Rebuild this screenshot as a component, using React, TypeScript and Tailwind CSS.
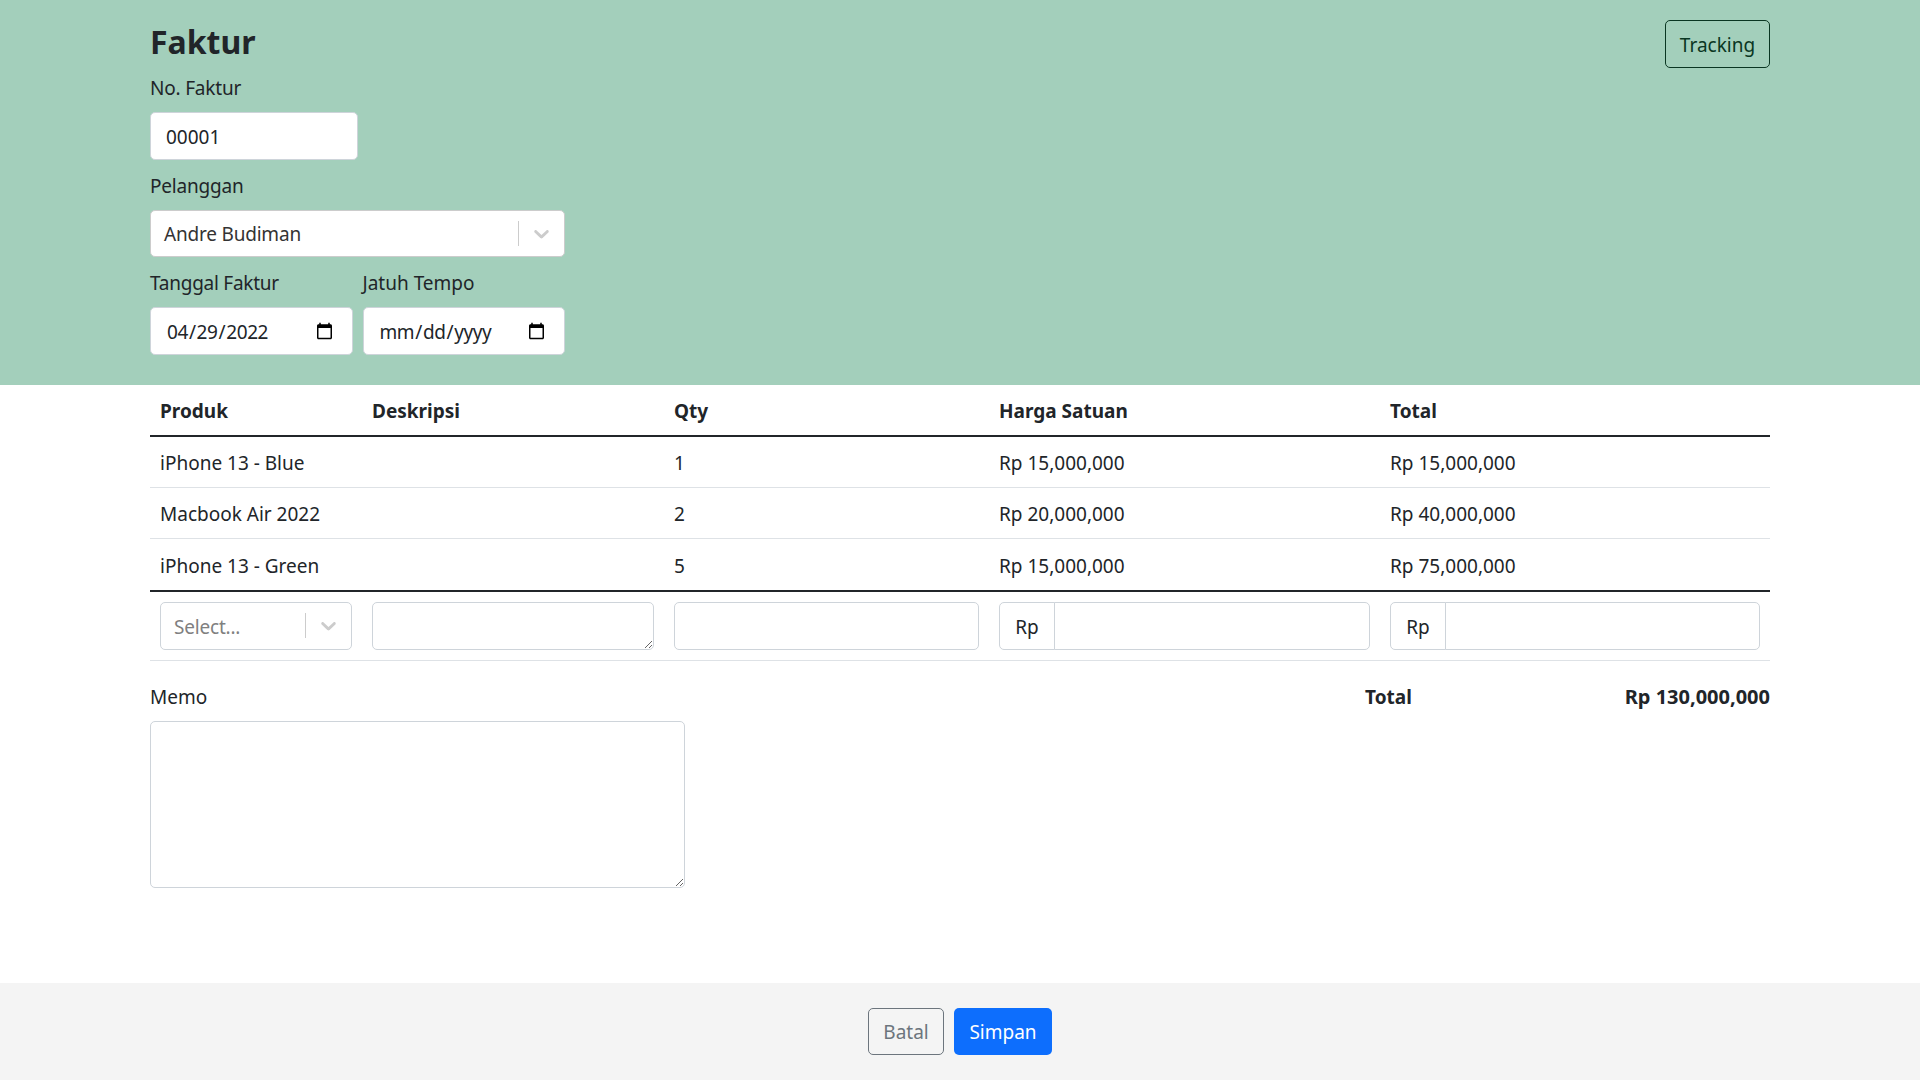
import React from 'react'

const rows = [
    { produk: "iPhone 13 - Blue", qty: 1, harga: "Rp 15,000,000", total: "Rp 15,000,000" },
    { produk: "Macbook Air 2022", qty: 2, harga: "Rp 20,000,000", total: "Rp 40,000,000" },
    { produk: "iPhone 13 - Green", qty: 5, harga: "Rp 15,000,000", total: "Rp 75,000,000" },
]

const inputClass = "block h-[47.5px] rounded-[5px] border border-[#ced4da] bg-white pl-[15px] pt-[2px] text-[19px] text-[#212529] outline-none"
const labelClass = "block h-[30px] pt-[1px]"

function Chevron() {
    return (
        <svg viewBox="0 0 20 20" className="size-[25px] fill-[#cccccc]">
            <path d="M4.516 7.548c0.436-0.446 1.043-0.481 1.576 0l3.908 3.747 3.908-3.747c0.533-0.481 1.141-0.446 1.574 0 0.436 0.445 0.408 1.197 0 1.615-0.406 0.418-4.695 4.502-4.695 4.502-0.217 0.223-0.502 0.335-0.787 0.335s-0.57-0.112-0.789-0.335c0 0-4.287-4.084-4.695-4.502s-0.436-1.17 0-1.615z" />
        </svg>
    )
}

function SelectBox({ label, muted }: { label: string; muted?: boolean }) {
    return (
        <div className={`flex items-center rounded-[5px] border bg-white ${muted ? "h-[48px] border-[#ced4da]" : "h-[47.5px] border-[#cccccc]"}`}>
            <span className={`flex-1 pt-[2px] pl-[13px] tracking-[-0.2px] ${muted ? "text-[#808080]" : "text-[#333333]"}`}>{label}</span>
            <span className="h-[25px] w-px bg-[#cccccc]" />
            <span className="px-[10px]"><Chevron /></span>
        </div>
    )
}

function RpInput() {
    return (
        <div className="flex h-[48px]">
            <span className="flex w-[56px] items-center justify-center rounded-l-[5px] border border-[#ced4da] bg-white pt-[2px]">Rp</span>
            <input className="-ml-px min-w-0 flex-1 rounded-r-[5px] border border-[#ced4da] bg-white px-[15px] outline-none" />
        </div>
    )
}

export default function App() {
    return (
        <div className="flex min-h-screen flex-col bg-white font-['Noto_Sans',sans-serif] text-[19px] leading-[30px] text-[#212529]">
            {/* Header form */}
            <section className="bg-[#a3cfbb] px-[150px] pt-[20px] pb-[30px]">
                <div className="flex items-start justify-between">
                    <div className="w-[415px]">
                        <h3 className="mb-[10px] h-[42px] pt-[1px] text-[32px] leading-[42px] font-bold">Faktur</h3>
                        <label className={`${labelClass} mb-[10px] tracking-[-0.2px]`}>No. Faktur</label>
                        <input className={`${inputClass} w-[208px] pr-[15px]`} defaultValue="00001" />
                        <label className={`${labelClass} mt-[10px] mb-[10px] tracking-[-0.2px]`}>Pelanggan</label>
                        <SelectBox label="Andre Budiman" />
                        <div className="mt-[10px] grid grid-cols-2 gap-x-[10px]">
                            <div>
                                <label className={`${labelClass} mb-[10px] tracking-[-0.25px]`}>Tanggal Faktur</label>
                                <input type="date" className={`${inputClass} w-full pr-[16px] tracking-[-0.4px]`} defaultValue="2022-04-29" />
                            </div>
                            <div>
                                <label className={`${labelClass} mb-[10px]`}>Jatuh Tempo</label>
                                <input type="date" className={`${inputClass} w-full pr-[16px] tracking-[-0.4px]`} />
                            </div>
                        </div>
                    </div>
                    <button className="h-[48px] w-[105px] rounded-[5px] border border-[#0a3622] pt-[1px] text-[#0a3622]">Tracking</button>
                </div>
            </section>

            {/* Items */}
            <section className="px-[150px]">
                <table className="w-full table-fixed border-collapse text-left">
                    <thead>
                        <tr className="h-[51px] border-b-2 border-[#212529]">
                            <th className="w-[212px] px-[10px] pt-[2px] font-bold">Produk</th>
                            <th className="w-[302px] px-[10px] pt-[2px] font-bold">Deskripsi</th>
                            <th className="w-[325px] px-[10px] pt-[2px] font-bold">Qty</th>
                            <th className="w-[391px] px-[10px] pt-[2px] font-bold">Harga Satuan</th>
                            <th className="w-[390px] px-[10px] pt-[2px] font-bold">Total</th>
                        </tr>
                    </thead>
                    <tbody>
                        {rows.map((row, index) => (
                            <tr key={index} className={`border-b ${index === 2 ? "h-[52px] border-b-2 border-[#212529]" : "h-[51.5px] border-[#dee2e6]"}`}>
                                <td className={`px-[10px] ${index === 2 ? "pt-[4px]" : "pt-[2px]"}`}>{row.produk}</td>
                                <td className="px-[10px]" />
                                <td className={`px-[10px] ${index === 2 ? "pt-[4px]" : "pt-[2px]"}`}>{row.qty}</td>
                                <td className={`px-[10px] ${index === 2 ? "pt-[4px]" : "pt-[2px]"}`}>{row.harga}</td>
                                <td className={`px-[10px] ${index === 2 ? "pt-[4px]" : "pt-[2px]"}`}>{row.total}</td>
                            </tr>
                        ))}
                        <tr className="border-b border-[#dee2e6]">
                            <td className="p-[10px]"><SelectBox label="Select..." muted /></td>
                            <td className="p-[10px]"><textarea className="block h-[48px] w-full rounded-[5px] border border-[#ced4da] bg-white outline-none" /></td>
                            <td className="p-[10px]"><input className="block h-[48px] w-full rounded-[5px] border border-[#ced4da] bg-white outline-none" /></td>
                            <td className="p-[10px]"><RpInput /></td>
                            <td className="p-[10px]"><RpInput /></td>
                        </tr>
                    </tbody>
                </table>

                {/* Memo and total */}
                <div className="mt-[21px] flex items-start">
                    <div className="w-[535px]">
                        <label className="mb-[9px] block">Memo</label>
                        <textarea className="block h-[167px] w-full rounded-[5px] border border-[#ced4da] bg-white outline-none" />
                    </div>
                    <div className="ml-[680px] flex flex-1 justify-between font-bold">
                        <span>Total</span>
                        <span className="text-[20px]">Rp 130,000,000</span>
                    </div>
                </div>
            </section>

            {/* Footer actions */}
            <footer className="mt-auto flex h-[97px] justify-center gap-[10px] bg-[#f4f4f4] pt-[25px]">
                <button className="h-[47px] w-[76px] rounded-[5px] border border-[#6c757d] text-[#6c757d]">Batal</button>
                <button className="h-[47px] w-[98px] rounded-[5px] bg-[#0d6efd] text-white">Simpan</button>
            </footer>
        </div>
    )
}
